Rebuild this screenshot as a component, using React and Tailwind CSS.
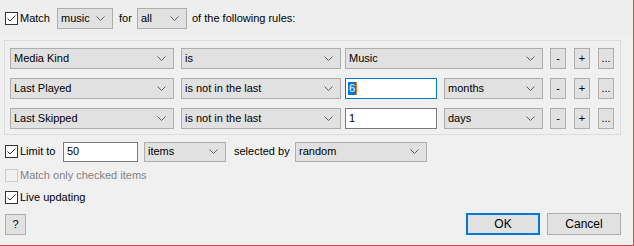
import React from "react";

const font = { fontFamily: '"Liberation Sans", Arial, sans-serif' };

function Check({ checked = true, disabled = false }) {
  return (
    <div
      className={
        "w-[13px] h-[13px] shrink-0 border flex items-center justify-center " +
        (disabled ? "border-[#cccccc] bg-[#f0f0f0]" : "border-[#333333] bg-white")
      }
    >
      {checked && (
        <svg width="11" height="11" viewBox="0 0 11 11">
          <polyline points="1.5,5.5 4,8 9.5,2.5" fill="none" stroke="#333333" strokeWidth="1" />
        </svg>
      )}
    </div>
  );
}

function Chevron() {
  return (
    <svg width="9" height="6" viewBox="0 0 9 6" className="shrink-0">
      <polyline points="0.5,0.5 4.5,4.5 8.5,0.5" fill="none" stroke="#606060" strokeWidth="1" />
    </svg>
  );
}

function Combo({ w, text, h = "h-[21px]" }) {
  return (
    <div
      className={`${w} ${h} shrink-0 flex items-center justify-between border border-[#adadad] bg-[#e1e1e1] pl-[3px] pr-[7px] text-[11px] text-[#000]`}
    >
      <span className="leading-none">{text}</span>
      <Chevron />
    </div>
  );
}

function Field({ w, children, focused = false, h = "h-[21px]" }) {
  return (
    <div
      className={`${w} ${h} shrink-0 flex items-center border ${
        focused ? "border-[#0078d7]" : "border-[#7a7a7a]"
      } bg-white pl-[2px] text-[11px]`}
    >
      {children}
    </div>
  );
}

function SmallBtn({ label }) {
  return (
    <div className="w-[16px] h-[21px] shrink-0 flex items-center justify-center border border-[#adadad] bg-[#e1e1e1] text-[11px] leading-none">
      {label}
    </div>
  );
}

function RuleRow({ a, b, third }) {
  return (
    <div className="flex items-center h-[21px]">
      <Combo w="w-[164px]" text={a} />
      <div className="w-[7px]" />
      <Combo w="w-[160px]" text={b} />
      <div className="w-[4px]" />
      {third}
      <div className="w-[7px]" />
      <SmallBtn label="-" />
      <div className="w-[8px]" />
      <SmallBtn label="+" />
      <div className="w-[8px]" />
      <SmallBtn label="..." />
    </div>
  );
}

export default function App() {
  return (
    <div
      style={font}
      className="w-[634px] h-[246px] bg-[#f0f0f0] flex flex-col border-r border-b border-[#d64a4a] text-[11px] text-black overflow-hidden"
    >
      {/* top strip */}
      <div className="h-[38px] bg-[#eeeeee] flex items-center pl-[5px] pb-[1px]">
        <Check />
        <span className="w-[39px] pl-[2px]">Match</span>
        <Combo w="w-[56px]" text="music" />
        <span className="w-[24px] pl-[6px]">for</span>
        <Combo w="w-[50px]" text="all" />
        <span className="pl-[5px]">of the following rules:</span>
      </div>

      {/* group box */}
      <div className="mt-[2px] ml-[4px] w-[617px] h-[95px] border border-[#dcdcdc] pt-[7px] pl-[5px] flex flex-col gap-[9px]">
        <RuleRow a="Media Kind" b="is" third={<Combo w="w-[198px]" text="Music" />} />
        <RuleRow
          a="Last Played"
          b="is not in the last"
          third={
            <div className="flex">
              <Field w="w-[92px]" focused>
                <span className="bg-[#0078d7] text-white px-[1px] leading-[13px]">6</span>
                <span className="w-[1px] h-[13px] bg-[#f07a1a]" />
              </Field>
              <div className="w-[7px]" />
              <Combo w="w-[99px]" text="months" />
            </div>
          }
        />
        <RuleRow
          a="Last Skipped"
          b="is not in the last"
          third={
            <div className="flex">
              <Field w="w-[92px]">
                <span className="pl-[1px]">1</span>
              </Field>
              <div className="w-[7px]" />
              <Combo w="w-[99px]" text="days" />
            </div>
          }
        />
      </div>

      {/* limit row */}
      <div className="mt-[6px] h-[21px] flex items-center pl-[5px]">
        <Check />
        <span className="w-[45px] pl-[2px]">Limit to</span>
        <Field w="w-[75px]" h="h-[20px]">
          <span className="pl-[1px]">50</span>
        </Field>
        <div className="w-[6px]" />
        <Combo w="w-[82px]" text="items" h="h-[20px]" />
        <span className="w-[69px] pl-[8px]">selected by</span>
        <Combo w="w-[132px]" text="random" h="h-[20px]" />
      </div>

      <div className="mt-[6px] h-[14px] flex items-center pl-[5px]">
        <Check checked={false} disabled />
        <span className="pl-[2px] text-[#838383]">Match only checked items</span>
      </div>

      <div className="mt-[8px] h-[14px] flex items-center pl-[5px]">
        <Check />
        <span className="pl-[2px]">Live updating</span>
      </div>

      <div className="mt-[9px] flex items-center pl-[5px] pr-[12px]">
        <div className="w-[21px] h-[21px] flex items-center justify-center border border-[#adadad] bg-[#e1e1e1] text-[11px]">
          ?
        </div>
        <div className="flex-1" />
        <div className="w-[74px] h-[22px] flex items-center justify-center border-2 border-[#0078d7] bg-[#e1e1e1] text-[12px]">
          OK
        </div>
        <div className="w-[7px]" />
        <div className="w-[74px] h-[22px] flex items-center justify-center border border-[#adadad] bg-[#e1e1e1] text-[12px]">
          Cancel
        </div>
      </div>
    </div>
  );
}
